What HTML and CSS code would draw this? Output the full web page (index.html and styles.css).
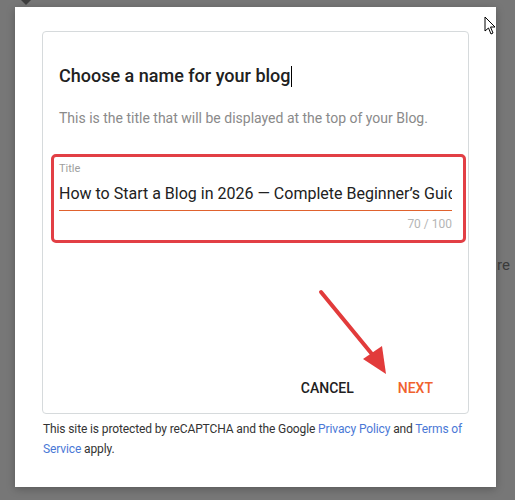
FILE: index.html
```html
<!DOCTYPE html>
<html>
<head>
<meta charset="utf-8">
<link rel="stylesheet" href="styles.css">
</head>
<body>
<div class="backdrop-tri"></div>
<div class="backdrop-text">re</div>
<div class="dialog">
  <div class="card">
    <h1 class="heading">Choose a name for your blog<span class="caret"></span></h1>
    <p class="sub">This is the title that will be displayed at the top of your Blog.</p>
    <div class="field">
      <div class="label">Title</div>
      <div class="input">How to Start a Blog in 2026 — Complete Beginner’s Guide</div>
      <div class="counter">70 / 100</div>
    </div>
    <div class="actions">
      <button class="btn cancel">CANCEL</button>
      <button class="btn next">NEXT</button>
    </div>
  </div>
  <p class="legal">This site is protected by reCAPTCHA and the Google <a href="#">Privacy Policy</a> and <a href="#">Terms of Service</a> apply.</p>
</div>
<svg class="arrow" width="80" height="100" viewBox="0 0 80 100">
  <line x1="5" y1="5" x2="60" y2="72" stroke="#e23b3b" stroke-width="4" stroke-linecap="round"/>
  <polygon points="70,87 47,72 66,59" fill="#e23b3b"/>
</svg>
<svg class="cursor" width="14" height="20" viewBox="0 0 14 20">
  <path d="M1 1 L1 15 L4.5 12 L7 18 L9 17 L6.5 11 L11 11 Z" fill="#fff" stroke="#000" stroke-width="1"/>
</svg>
</body>
</html>
```
FILE: styles.css
```css
html, body {
  margin: 0;
  padding: 0;
}
body {
  background: #777777;
  width: 515px;
  height: 500px;
  overflow: hidden;
  position: relative;
  font-family: Roboto, "Liberation Sans", Arial, sans-serif;
  padding: 7px 0 0 15px;
  box-sizing: border-box;
}
.backdrop-tri {
  position: absolute;
  left: 21px;
  top: 0;
  width: 0;
  height: 0;
  border-left: 5px solid transparent;
  border-right: 5px solid transparent;
  border-top: 5px solid #3c3c3c;
}
.backdrop-text {
  position: absolute;
  left: 497px;
  top: 256px;
  font-size: 15px;
  color: #3a3a3a;
}
.dialog {
  width: 481px;
  height: 480px;
  background: #fff;
  box-sizing: border-box;
  padding: 24px 27px 0 27px;
  box-shadow: 0 2px 8px rgba(0,0,0,0.25);
}
.card {
  border: 1px solid #d6dadc;
  border-radius: 4px;
  height: 383px;
  box-sizing: border-box;
  padding: 32px 16px 0 16px;
  display: flex;
  flex-direction: column;
}
.heading {
  margin: 0;
  font-size: 18px;
  font-weight: 500;
  line-height: 24px;
  color: #212121;
  display: flex;
  align-items: center;
}
.caret {
  display: inline-block;
  width: 1px;
  height: 21px;
  background: #000;
}
.sub {
  margin: 20px 0 0 0;
  font-size: 14px;
  line-height: 20px;
  color: #8a8a8a;
}
.field {
  margin: 26px -14px 0 -8px;
  border: 3px solid #e23f45;
  border-radius: 5px;
  padding: 5px 11px 9px 5px;
}
.label {
  font-size: 11px;
  line-height: 14px;
  color: #9e9e9e;
}
.input {
  margin-top: 7px;
  font-size: 16px;
  line-height: 22px;
  color: #212121;
  white-space: nowrap;
  overflow: hidden;
  padding-bottom: 5px;
  border-bottom: 1px solid #e0622e;
}
.counter {
  margin-top: 6px;
  text-align: right;
  font-size: 12px;
  line-height: 14px;
  color: #b5b5b5;
}
.actions {
  margin-top: auto;
  margin-bottom: 15px;
  display: flex;
  justify-content: flex-end;
  gap: 44px;
  padding-right: 19px;
}
.btn {
  background: none;
  border: 0;
  padding: 0;
  font-family: Roboto, "Liberation Sans", Arial, sans-serif;
  font-size: 14px;
  font-weight: 500;
  line-height: 20px;
}
.cancel {
  color: #212121;
}
.next {
  color: #f0622e;
}
.legal {
  margin: 5px 0 0 1px;
  font-size: 12px;
  line-height: 20px;
  letter-spacing: -0.12px;
  color: #333;
}
.legal a {
  color: #4a78d6;
  text-decoration: none;
}
.arrow {
  position: absolute;
  left: 316px;
  top: 287px;
}
.cursor {
  position: absolute;
  left: 484px;
  top: 16px;
}
```
